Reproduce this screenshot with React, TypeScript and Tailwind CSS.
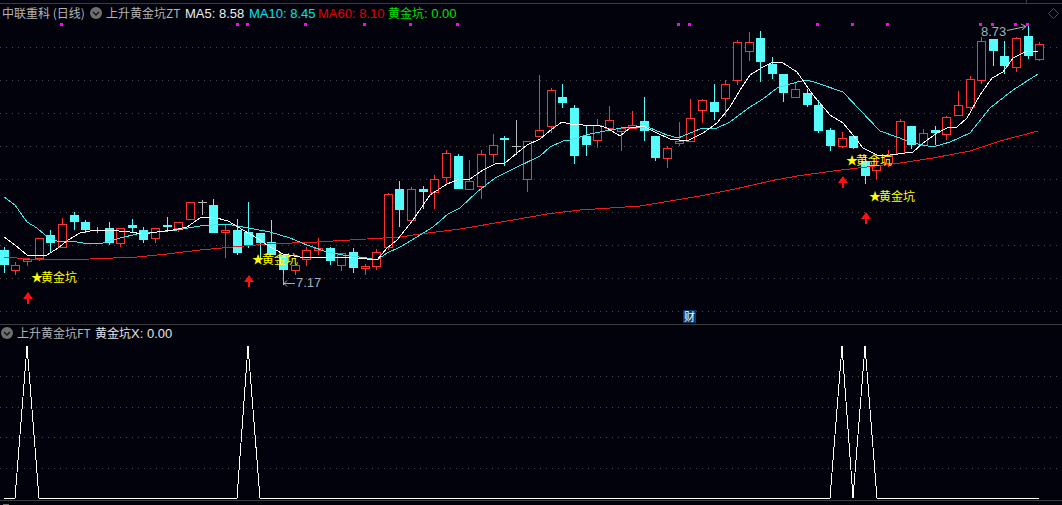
type Candle = [number, number, number, number, 'r' | 'c' | 'g'];

// [wick top, body top, body bottom, wick bottom, colour]
const candles: Candle[] = [
  [247, 250, 265, 273, 'c'], [262, 265, 271, 275, 'r'], [258, 259, 262, 266, 'r'], [238, 238, 259, 261, 'r'],
  [230, 235, 243, 252, 'c'], [218, 224, 248, 248, 'r'], [212, 215, 222, 230, 'c'], [220, 222, 230, 233, 'c'],
  [227, 230, 230, 233, 'g'], [222, 228, 243, 245, 'c'], [228, 228, 244, 247, 'r'], [219, 225, 228, 232, 'c'],
  [227, 230, 240, 243, 'c'], [228, 228, 239, 243, 'r'], [217, 225, 227, 232, 'c'], [222, 222, 229, 232, 'r'],
  [202, 202, 220, 220, 'r'], [200, 202, 202, 215, 'g'], [199, 205, 233, 233, 'c'], [225, 230, 233, 258, 'r'],
  [219, 230, 253, 255, 'c'], [202, 232, 245, 248, 'c'], [233, 233, 243, 258, 'c'], [220, 242, 255, 255, 'c'],
  [255, 255, 270, 285, 'c'], [265, 265, 271, 275, 'r'], [247, 250, 260, 266, 'r'], [238, 248, 251, 255, 'r'],
  [247, 248, 261, 265, 'c'], [253, 253, 266, 271, 'r'], [248, 252, 268, 273, 'c'], [264, 266, 269, 275, 'r'],
  [249, 252, 267, 270, 'r'], [193, 194, 248, 250, 'r'], [181, 189, 210, 227, 'c'], [187, 189, 221, 221, 'r'],
  [186, 189, 192, 209, 'c'], [175, 179, 193, 209, 'r'], [150, 153, 178, 185, 'r'], [154, 156, 189, 189, 'c'],
  [160, 181, 190, 190, 'r'], [150, 154, 187, 199, 'r'], [134, 145, 155, 163, 'r'], [136, 138, 140, 166, 'c'],
  [120, 146, 146, 155, 'g'], [141, 141, 180, 192, 'r'], [75, 130, 137, 137, 'r'], [88, 90, 127, 133, 'r'],
  [84, 97, 103, 108, 'c'], [105, 108, 156, 164, 'c'], [126, 136, 145, 156, 'c'], [119, 125, 141, 148, 'r'],
  [106, 120, 129, 129, 'r'], [127, 128, 132, 151, 'r'], [111, 125, 129, 129, 'r'], [97, 121, 131, 141, 'c'],
  [136, 136, 158, 161, 'c'], [146, 148, 159, 168, 'r'], [122, 141, 144, 146, 'r'], [99, 118, 142, 142, 'r'],
  [99, 100, 111, 123, 'r'], [84, 102, 112, 120, 'c'], [80, 84, 99, 117, 'r'], [40, 42, 81, 85, 'r'],
  [32, 42, 52, 61, 'r'], [31, 38, 62, 82, 'c'], [57, 64, 74, 79, 'c'], [74, 74, 93, 102, 'c'],
  [83, 89, 98, 98, 'r'], [89, 93, 105, 107, 'c'], [100, 105, 131, 133, 'c'], [128, 130, 146, 151, 'c'],
  [132, 138, 147, 148, 'r'], [136, 136, 148, 149, 'c'], [155, 161, 176, 184, 'c'], [155, 165, 171, 179, 'r'],
  [150, 155, 164, 167, 'r'], [119, 121, 154, 154, 'r'], [126, 126, 145, 149, 'c'], [129, 133, 146, 146, 'r'],
  [126, 130, 133, 145, 'c'], [116, 117, 135, 140, 'r'], [91, 105, 116, 116, 'r'], [76, 79, 108, 110, 'r'],
  [37, 41, 81, 84, 'r'], [39, 39, 51, 66, 'c'], [41, 56, 66, 74, 'c'], [37, 38, 68, 72, 'r'],
  [25, 36, 56, 59, 'c'], [42, 44, 60, 61, 'r'],
];

const ma5 = '4,237 15,245 27,255 37,256 47,255 58,248 68,240 80,233 90,231 107,230 130,232 143,234 157,232 173,230 187,227 200,218 213,217 228,221 243,230 257,238 267,245 283,254 300,257 317,257 340,257 357,258 377,260 387,248 397,240 413,220 430,195 447,184 457,180 470,179 483,170 495,164 505,163 517,153 527,145 540,139 552,129 562,122 570,124 583,125 597,125 607,128 620,136 630,128 643,126 657,133 670,139 687,141 703,133 717,123 730,107 740,90 750,75 763,67 773,62 783,63 797,72 813,95 830,115 843,123 853,135 863,148 877,155 890,155 913,152 923,143 937,133 947,128 957,127 967,118 980,95 992,78 1003,72 1013,58 1027,51 1038,51';
const ma10 = '4,197 15,205 27,222 37,228 45,235 57,241 77,242 83,243 103,243 120,238 137,234 157,232 177,230 200,226 227,224 243,227 270,232 290,238 307,245 327,252 343,255 367,258 377,260 387,253 400,247 412,240 433,227 448,214 460,208 477,192 495,178 513,169 540,156 550,147 563,141 570,140 590,134 610,130 627,127 650,128 667,135 678,138 700,129 717,128 730,122 750,107 763,99 777,88 797,82 807,80 817,83 843,92 860,110 880,131 897,137 913,143 933,147 950,142 970,133 990,108 1013,90 1038,74';
const ma60 = '4,257 43,260 90,259 137,257 167,254 200,250 233,247 267,244 317,242 350,240 400,237 420,234 460,229 513,220 547,214 580,210 640,206 700,196 735,189 753,185 770,181 797,176 833,171 867,167 900,163 933,158 970,151 1000,141 1038,131';

const markers = [61, 237, 247, 305, 364, 410, 457, 678, 689, 817, 852, 887, 980, 992, 1015, 1027];
const topGrid = [47, 80, 113, 146, 179, 212, 245, 278, 311];
const subGrid = [51, 82, 112, 143];
const arrows: [number, number, number][] = [[28, 292, 304], [249, 275, 287], [843, 176, 188], [866, 212, 224]];
const labels: [number, number][] = [[31, 282], [252, 264], [846, 165], [869, 201]];
const pulse = '4,173 15,173 27,21 39,173 237,173 248,21 260,173 830,173 842,21 853,173 865,21 877,173 1039,173';

const cjk = "'Noto Sans CJK SC', 'Liberation Sans', sans-serif";

function Chevron({ className }: { className: string }) {
  return (
    <svg viewBox="0 0 12 12" className={className}>
      <circle cx="6" cy="6" r="6" fill="#6f6f6f" />
      <path d="M3 5 L6 8 L9 5" fill="none" stroke="#15151c" strokeWidth="1.5" />
    </svg>
  );
}

function CandleChart() {
  return (
    <svg width="1062" height="320" viewBox="0 4 1062 320" className="absolute inset-0">
      {topGrid.map(y => (
        <line key={y} x1="0" x2="1062" y1={y + 0.5} y2={y + 0.5} stroke="#4a4a4a" strokeDasharray="1 5" />
      ))}
      <g shapeRendering="crispEdges">
        {candles.map(([hi, top, bottom, lo, kind], i) => {
          const cx = Math.round(3.8 + 11.636 * i);
          const color = kind === 'r' ? '#ff3232' : kind === 'c' ? '#54fcfc' : '#b8b8b8';
          return (
            <g key={i}>
              <rect x={cx} y={hi} width="1" height={lo - hi} fill={color} />
              <rect x={cx - 4} y={top} width="9" height={Math.max(bottom - top, 1)} fill={color} />
              {kind === 'r' && (
                <rect x={cx - 3} y={top + 1} width="7" height={Math.max(bottom - top - 2, 0)} fill="#02020d" />
              )}
            </g>
          );
        })}
      </g>
      <g shapeRendering="crispEdges" fill="none">
        <polyline points={ma60} stroke="#f01818" strokeWidth="1" />
        <polyline points={ma10} stroke="#40e8ec" strokeWidth="1" />
        <polyline points={ma5} stroke="#ffffff" strokeWidth="1" />
      </g>
      {markers.map(x => (
        <rect key={x} x={x - 1} y="23" width="3" height="3" fill="#ff00ff" />
      ))}
      {arrows.map(([x, y1, y2]) => (
        <path key={x} d={`M${x - 5} ${y1 + 7} L${x} ${y1} L${x + 5} ${y1 + 7} L${x + 1} ${y1 + 7} L${x + 1} ${y2} L${x - 1} ${y2} L${x - 1} ${y1 + 7} Z`} fill="#ff1010" />
      ))}
      {labels.map(([x, y]) => (
        <text key={x} x={x} y={y} fill="#ffff00" fontSize="12" fontFamily={cjk}>
          <tspan letterSpacing="-2">★</tspan>黄金坑
        </text>
      ))}
      <path d="M295 283.5 L284 283.5 M287 280.5 L284 283.5 L287 286.5 M283.5 274 L283.5 284" fill="none" stroke="#a8a8a8" />
      <text x="296" y="287" fill="#a6aeb8" fontSize="13" fontFamily="'Liberation Sans', sans-serif">7.17</text>
      <text x="981" y="36" fill="#a6aeb8" fontSize="13" fontFamily="'Liberation Sans', sans-serif">8.73</text>
      <path d="M1007 30.5 L1026 26.5 M1021 24 L1026 26.5 L1022 30" fill="none" stroke="#b0b0b0" />
      <path d="M1053.5 8.5 L1058.5 13.5 L1053.5 18.5 L1048.5 13.5 Z" fill="none" stroke="#4c4c4c" />
    </svg>
  );
}

function PulseChart() {
  return (
    <svg width="1062" height="175" viewBox="0 0 1062 175" className="absolute inset-0">
      {subGrid.map(y => (
        <line key={y} x1="0" x2="1062" y1={y + 0.5} y2={y + 0.5} stroke="#4a4a4a" strokeDasharray="1 5" />
      ))}
      <polyline points={pulse} fill="none" stroke="#ffffff" strokeWidth="1" shapeRendering="crispEdges" />
    </svg>
  );
}

export default function App() {
  return (
    <div className="w-[1062px] h-[505px] bg-[#02020d] flex flex-col overflow-hidden font-['Noto_Sans_CJK_SC','Liberation_Sans',sans-serif] text-[12px] leading-none">
      <div className="h-[4px] border-b border-[#3c3c3c] relative shrink-0">
        <div className="absolute left-[1026px] top-0 h-[3px] w-px bg-[#3c3c3c]"></div>
      </div>

      {/* main chart */}
      <div className="relative h-[321px] shrink-0 border-b border-[#3c3c3c]">
        <CandleChart />
        <div className="relative flex items-center h-[18px] pl-[2px] whitespace-nowrap">
          <span className="text-[#b4b4b4] w-[84px]">中联重科 (日线)</span>
          <Chevron className="w-3 h-3 ml-[4px]" />
          <span className="text-[#b4b4b4] ml-[4px] w-[79px]">上升黄金坑ZT</span>
          <span className="text-[#eeeeee] text-[13px] font-['Liberation_Sans',sans-serif] w-[64px]">MA5: 8.58</span>
          <span className="text-[#00e4e8] text-[13px] font-['Liberation_Sans',sans-serif] w-[69px]">MA10: 8.45</span>
          <span className="text-[#e40000] text-[13px] font-['Liberation_Sans',sans-serif] w-[70px]">MA60: 8.10</span>
          <span className="text-[#00e000]">黄金坑<span className="text-[13px] font-['Liberation_Sans',sans-serif]">: 0.00</span></span>
        </div>
        <div className="absolute left-[683px] top-[306px] w-[13px] h-[13px] bg-[#0b3a72] text-white text-[11px] flex items-center justify-center">财</div>
      </div>

      {/* indicator pane */}
      <div className="relative h-[176px] shrink-0 border-b border-[#3c3c3c]">
        <PulseChart />
        <div className="relative flex items-center h-[16px] pl-px whitespace-nowrap">
          <Chevron className="w-3 h-3" />
          <span className="text-[#b4b4b4] ml-[4px] w-[78px]">上升黄金坑FT</span>
          <span className="text-[#e4e4e4]">黄金坑<span className="text-[13px] font-['Liberation_Sans',sans-serif]">X: 0.00</span></span>
        </div>
      </div>

      <div className="pl-[3px] pt-[3px]">
        <div className="w-[6px] h-[1px] bg-[#6f6f6f]"></div>
      </div>
    </div>
  );
}
